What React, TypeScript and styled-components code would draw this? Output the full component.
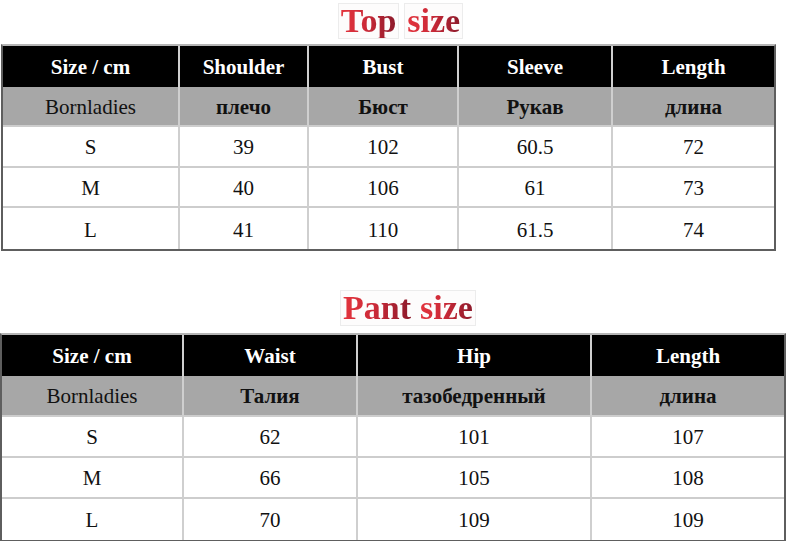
import styled, { createGlobalStyle } from "styled-components";

const GlobalStyle = createGlobalStyle`
  html, body {
    margin: 0;
    padding: 0;
    background: #ffffff;
  }
  body {
    font-family: "Liberation Serif", "Times New Roman", serif;
    color: #111;
  }
`;

const Page = styled.div`
  width: 788px;
  height: 541px;
  overflow: hidden;
  display: flex;
  flex-direction: column;
`;

const Section = styled.section<{ $top: number; $left: number }>`
  display: flex;
  flex-direction: column;
  margin-top: ${(p) => p.$top}px;
  margin-left: ${(p) => p.$left}px;
`;

const TitleRow = styled.div<{ $shift: number; $gap: number }>`
  display: flex;
  justify-content: center;
  gap: 5px;
  padding-left: ${(p) => p.$shift}px;
  margin-bottom: ${(p) => p.$gap}px;
`;

const WordBox = styled.span`
  display: inline-flex;
  align-items: center;
  gap: 9px;
  padding: 0 2px;
  height: 34px;
  border: 1px solid #ececec;
  background: #fdfcfc;
`;

const Word = styled.span`
  font-family: "Liberation Serif", "Times New Roman", serif;
  font-weight: 700;
  font-size: 34px;
  line-height: 34px;
  background: linear-gradient(90deg, #e3343d 0%, #cc2a38 45%, #8c1a2b 100%);
  -webkit-background-clip: text;
  background-clip: text;
  color: transparent;
`;

const Grid = styled.div<{ $cols: string; $width: number; $row: number }>`
  display: grid;
  grid-template-columns: ${(p) => p.$cols};
  grid-auto-rows: ${(p) => p.$row}px;
  width: ${(p) => p.$width}px;
  box-sizing: border-box;
  border: 2px solid #5e5e5e;
  border-top-color: #b5b5b5;
`;

type Kind = "head" | "sub" | "data";

const Cell = styled.div<{ $kind: Kind; $last: boolean; $bottom: boolean; $bold?: boolean }>`
  box-sizing: border-box;
  display: flex;
  align-items: center;
  justify-content: center;
  padding-top: 3px;
  font-size: 21px;
  white-space: nowrap;
  font-weight: ${(p) => (p.$kind === "head" || p.$bold ? 700 : 400)};
  color: ${(p) => (p.$kind === "head" ? "#ffffff" : "#111111")};
  background: ${(p) =>
    p.$kind === "head" ? "#000000" : p.$kind === "sub" ? "#a7a7a7" : "#ffffff"};
  border-right: ${(p) => (p.$last ? "none" : "2px solid #cfcfcf")};
  border-bottom: ${(p) =>
    p.$bottom ? "none" : p.$kind === "head" ? "none" : "2px solid #cdcdcd"};
`;

interface SizeTable {
  title: string[][];
  cols: string;
  width: number;
  row: number;
  head: string[];
  sub: string[];
  rows: string[][];
}

const topTable: SizeTable = {
  title: [["Top"], ["size"]],
  cols: "177px 129px 150px 154px 1fr",
  width: 775,
  row: 40.6,
  head: ["Size / cm", "Shoulder", "Bust", "Sleeve", "Length"],
  sub: ["Bornladies", "плечо", "Бюст", "Рукав", "длина"],
  rows: [
    ["S", "39", "102", "60.5", "72"],
    ["M", "40", "106", "61", "73"],
    ["L", "41", "110", "61.5", "74"],
  ],
};

const pantTable: SizeTable = {
  title: [["Pant", "size"]],
  cols: "182px 174px 234px 1fr",
  width: 786,
  row: 41,
  head: ["Size / cm", "Waist", "Hip", "Length"],
  sub: ["Bornladies", "Талия", "тазобедренный", "длина"],
  rows: [
    ["S", "62", "101", "107"],
    ["M", "66", "105", "108"],
    ["L", "70", "109", "109"],
  ],
};

function SizeChart({ data }: { data: SizeTable }) {
  const n = data.head.length;
  return (
    <Grid $cols={data.cols} $width={data.width} $row={data.row}>
      {data.head.map((h, i) => (
        <Cell key={"h" + i} $kind="head" $last={i === n - 1} $bottom={false}>
          {h}
        </Cell>
      ))}
      {data.sub.map((s, i) => (
        <Cell key={"s" + i} $kind="sub" $last={i === n - 1} $bottom={false} $bold={i > 0}>
          {s}
        </Cell>
      ))}
      {data.rows.map((row, r) =>
        row.map((v, i) => (
          <Cell
            key={r + "-" + i}
            $kind="data"
            $last={i === n - 1}
            $bottom={r === data.rows.length - 1}
          >
            {v}
          </Cell>
        ))
      )}
    </Grid>
  );
}

function Title({ boxes, shift, gap }: { boxes: string[][]; shift: number; gap: number }) {
  return (
    <TitleRow $shift={shift} $gap={gap}>
      {boxes.map((words, b) => (
        <WordBox key={b}>
          {words.map((w) => (
            <Word key={w}>{w}</Word>
          ))}
        </WordBox>
      ))}
    </TitleRow>
  );
}

export default function App() {
  return (
    <Page>
      <GlobalStyle />
      <Section $top={3} $left={1}>
        <Title boxes={topTable.title} shift={12} gap={5} />
        <SizeChart data={topTable} />
      </Section>
      <Section $top={39} $left={0}>
        <Title boxes={pantTable.title} shift={28} gap={7} />
        <SizeChart data={pantTable} />
      </Section>
    </Page>
  );
}
